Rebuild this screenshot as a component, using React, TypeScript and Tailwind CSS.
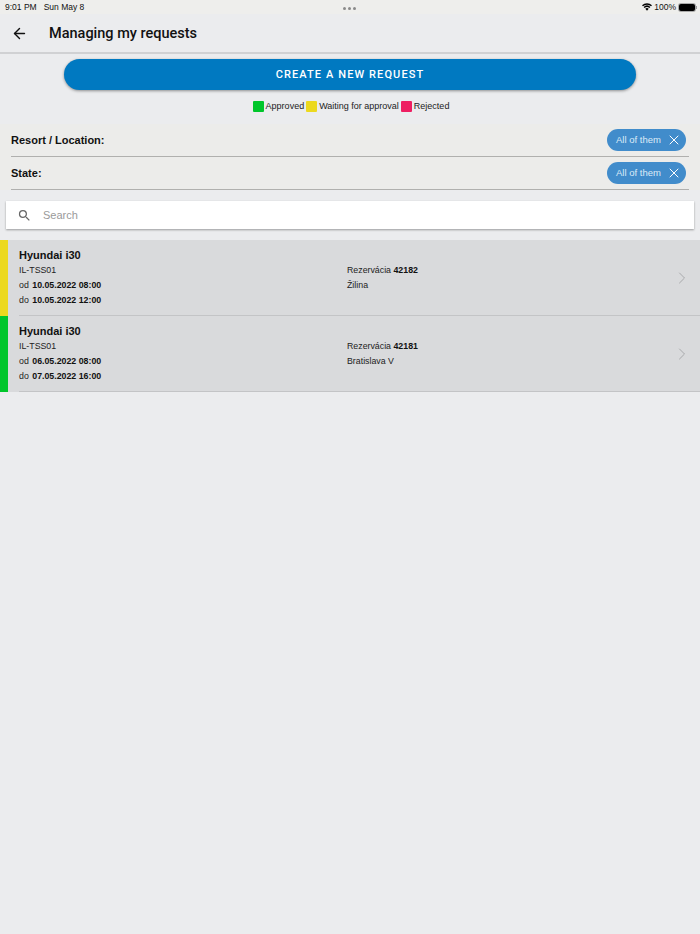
import { ArrowLeft, ChevronRight, X } from "lucide-react";

const requests = [
  { color: "bg-[#ecd91f]", from: "10.05.2022 08:00", to: "10.05.2022 12:00", id: "42182", place: "Žilina" },
  { color: "bg-[#00c62b]", from: "06.05.2022 08:00", to: "07.05.2022 16:00", id: "42181", place: "Bratislava V" }
];

function StatusBar() {
  return (
    <div className="relative flex h-[14px] items-center justify-between bg-[#eeeeec] pl-[5px] pr-[3px] text-[8.5px] text-[#111]">
      <div className="flex gap-[7px]">
        <span>9:01 PM</span>
        <span>Sun May 8</span>
      </div>
      <div className="absolute left-[343px] top-[7px] flex gap-[2px]">
        <span className="h-[3px] w-[3px] rounded-full bg-[#8a8a8a]" />
        <span className="h-[3px] w-[3px] rounded-full bg-[#8a8a8a]" />
        <span className="h-[3px] w-[3px] rounded-full bg-[#8a8a8a]" />
      </div>
      <div className="flex items-center gap-[2px]">
        <svg width="10" height="8" viewBox="0 0 20 15" fill="#000">
          <path d="M10 15 6.6 11.2a5 5 0 0 1 6.8 0z" />
          <path d="M5.2 9.6 3.2 7.4a10 10 0 0 1 13.6 0l-2 2.2a7 7 0 0 0-9.6 0z" />
          <path d="M1.9 6 0 3.9a15 15 0 0 1 20 0L18.1 6a12 12 0 0 0-16.2 0z" />
        </svg>
        <span>100%</span>
        <div className="ml-[1px] flex items-center">
          <div className="h-[7px] w-[16px] rounded-[2px] bg-black ring-1 ring-[#aaa]" />
          <div className="ml-[1px] h-[3px] w-[1px] bg-[#999]" />
        </div>
      </div>
    </div>
  );
}

function LegendItem({ color, label }: { color: string; label: string }) {
  return (
    <div className="flex items-center gap-[2px]">
      <span className={`h-[11px] w-[11px] rounded-[1px] ${color}`} />
      <span>{label}</span>
    </div>
  );
}

function FilterRow({ label }: { label: string }) {
  return (
    <div className="flex h-[33px] items-center justify-between border-b border-[#b0b0ae] pr-[3px]">
      <span className="text-[11px] font-bold text-[#111]">{label}</span>
      <div className="flex h-[22px] w-[79px] items-center justify-between rounded-full bg-[#418ccb] pl-[9px] pr-[4px] text-[9.5px] whitespace-nowrap text-[#dcebf7]">
        <span>All of them</span>
        <X className="h-[16px] w-[16px] text-white" strokeWidth={1.5} />
      </div>
    </div>
  );
}

function RequestRow({ color, from, to, id, place }: (typeof requests)[number]) {
  return (
    <div className="flex h-[76px] bg-[#d9dadc]">
      <div className={`w-[8px] ${color}`} />
      <div className="ml-[11px] flex flex-1 items-center border-b border-[#c3c4c6] text-[8.8px] leading-[15px] text-[#222]">
        <div className="w-[328px]">
          <div className="pt-[1px] text-[11px] leading-[15px] font-bold text-[#111]">Hyundai i30</div>
          <div>IL-TSS01</div>
          <div>
            od <span className="ml-[1px] font-bold text-[#111]">{from}</span>
          </div>
          <div>
            do <span className="ml-[1px] font-bold text-[#111]">{to}</span>
          </div>
        </div>
        <div className="flex-1">
          <div>
            Rezervácia <span className="font-bold text-[#111]">{id}</span>
          </div>
          <div>{place}</div>
        </div>
        <ChevronRight className="mr-[8px] h-[20px] w-[20px] text-[#a3a4a6]" strokeWidth={1.1} />
      </div>
    </div>
  );
}

export default function App() {
  return (
    <div className="flex min-h-[934px] flex-col bg-[#ebecee] font-['Liberation_Sans',Arial,sans-serif]">
      <StatusBar />

      <header className="flex h-[40px] items-center border-b-2 border-[#d0d1d3] bg-[#ebecee]">
        <ArrowLeft className="ml-[11px] h-[17px] w-[17px] text-[#111]" strokeWidth={2} />
        <h1 className="ml-[21px] pt-[1px] font-['Roboto',sans-serif] text-[14.5px] font-medium text-[#111]">Managing my requests</h1>
      </header>

      <div className="mt-[5px] px-[64px]">
        <button
          className="h-[31px] w-full rounded-full bg-[#0079c1] pt-[1px] font-['Roboto',sans-serif] text-[11px] font-medium tracking-[1.1px] text-white shadow-[0_1px_3px_rgba(0,0,0,0.4)]"
          type="button"
        >
          CREATE A NEW REQUEST
        </button>
      </div>

      <div className="mt-[10px] flex h-[13px] items-center justify-center gap-[2px] pl-[2px] text-[9px] text-[#222]">
        <LegendItem color="bg-[#00c62b]" label="Approved" />
        <LegendItem color="bg-[#ecd91f]" label="Waiting for approval" />
        <LegendItem color="bg-[#ee1f62]" label="Rejected" />
      </div>

      <div className="mt-[11px] bg-[#ececea] px-[11px]">
        <FilterRow label="Resort / Location:" />
        <FilterRow label="State:" />
      </div>

      <div className="mx-[6px] mt-[11px] flex h-[28px] items-center bg-white shadow-[0_1px_2px_rgba(0,0,0,0.35)]">
        <svg className="ml-[11px] h-[15px] w-[15px]" viewBox="0 0 24 24" fill="#666">
          <path d="M15.5 14h-.79l-.28-.27A6.47 6.47 0 0 0 16 9.5 6.5 6.5 0 1 0 9.5 16c1.61 0 3.09-.59 4.23-1.57l.27.28v.79l5 4.99L20.49 19l-4.99-5zm-6 0C7.01 14 5 11.99 5 9.5S7.01 5 9.5 5 14 7.01 14 9.5 11.99 14 9.5 14z" />
        </svg>
        <span className="ml-[11px] text-[11px] text-[#9a9a9a]">Search</span>
      </div>

      <div className="mt-[11px]">
        {requests.map((request) => (
          <RequestRow key={request.id} {...request} />
        ))}
      </div>
    </div>
  );
}
